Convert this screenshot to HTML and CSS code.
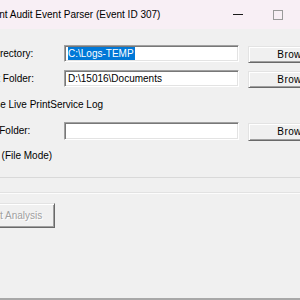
FILE: index.html
```html
<!DOCTYPE html>
<html>
<head>
<meta charset="utf-8">
<link rel="stylesheet" href="styles.css">
</head>
<body>
<div class="screen">
  <div class="window">
    <div class="titlebar">
      <div class="title">Print Audit Event Parser (Event ID 307)</div>
      <span class="min"></span>
      <span class="max"></span>
    </div>
    <div class="client">
      <div class="row r1">
        <span class="lab">Log Directory:</span>
        <div class="input"><span class="sel">C:\Logs-TEMP</span></div>
        <button class="btn">Browse...</button>
      </div>
      <div class="row r2">
        <span class="lab">Output Folder:</span>
        <div class="input">D:\15016\Documents</div>
        <button class="btn">Browse...</button>
      </div>
      <div class="check r3">
        <span class="box"></span>
        <span class="ctext">Use Live PrintService Log</span>
      </div>
      <div class="row r4">
        <span class="lab">Watch Folder:</span>
        <div class="input"></div>
        <button class="btn">Browse...</button>
      </div>
      <div class="mode">Mode: (File Mode)</div>
      <div class="sep1"></div>
      <div class="sep2"></div>
      <button class="start" disabled>Start Analysis</button>
    </div>
  </div>
  <div class="bottomline"></div>
</div>
</body>
</html>
```
FILE: styles.css
```css
html, body {
  margin: 0;
  padding: 0;
  background: #f0f0f0;
}
body {
  font-family: "Liberation Sans", Arial, sans-serif;
  font-size: 10px;
  color: #000;
}
.screen {
  width: 300px;
  height: 300px;
  overflow: hidden;
  display: flex;
  flex-direction: column;
  background: #f0f0f0;
}
.window {
  flex: 1;
  margin-left: -29px;
  width: 420px;
  display: flex;
  flex-direction: column;
}
.titlebar {
  height: 29px;
  flex: none;
  background: #f8eff5;
  display: flex;
  align-items: center;
}
.title {
  width: 262px;
  box-sizing: border-box;
  padding-left: 16px;
  font-size: 10px;
  white-space: nowrap;
  line-height: 12px;
}
.min {
  width: 10px;
  height: 1px;
  background: #1a1a1a;
}
.max {
  width: 8px;
  height: 8px;
  margin-left: 30px;
  border: 1px solid #9a9a9a;
}
.client {
  flex: 1;
  display: flex;
  flex-direction: column;
}
.row {
  display: flex;
  align-items: flex-start;
  height: 18px;
  flex: none;
}
.lab {
  width: 93px;
  flex: none;
  white-space: nowrap;
  line-height: 17px;
}
.r2 .lab { text-indent: -1px; }
.r4 .lab { text-indent: -2.5px; }
.input {
  width: 175px;
  height: 17px;
  box-sizing: border-box;
  flex: none;
  background: #fff;
  border-top: 1px solid #a0a0a0;
  border-left: 1px solid #a0a0a0;
  border-right: 1px solid #fff;
  border-bottom: 1px solid #fff;
  box-shadow: inset 1px 1px 0 #787878, inset -1px -1px 0 #e3e3e3;
  padding: 1px 0 0 3px;
  line-height: 13px;
  white-space: nowrap;
  overflow: hidden;
}
.sel {
  background: #0078d7;
  color: #fff;
  display: inline-block;
  padding: 0 1px 0 0;
}
.btn {
  margin-left: 9px;
  margin-top: 1px;
  width: 100px;
  height: 17px;
  flex: none;
  box-sizing: border-box;
  padding: 0 0 0 4px;
  font: inherit;
  letter-spacing: 0.4px;
  color: #000;
  background: #f0f0f0;
  border-top: 1px solid #e3e3e3;
  border-left: 1px solid #e3e3e3;
  border-right: 1px solid #696969;
  border-bottom: 1px solid #696969;
  box-shadow: inset 1px 1px 0 #fff, inset -1px -1px 0 #a0a0a0;
  line-height: 14px;
  text-align: center;
}
.r1 { margin-top: 16px; }
.r2 { margin-top: 7px; }
.check {
  display: flex;
  align-items: center;
  height: 16px;
  margin-top: 8px;
  flex: none;
}
.box {
  width: 11px;
  height: 11px;
  box-sizing: border-box;
  border: 1px solid #333;
  background: #fff;
  flex: none;
}
.ctext {
  margin-left: 6px;
  white-space: nowrap;
}
.r4 { margin-top: 10px; height: 19px; }
.r4 .input { height: 18px; }
.r4 .btn { height: 18px; }
.mode {
  margin-top: 7px;
  height: 16px;
  line-height: 16px;
  white-space: nowrap;
  flex: none;
}
.sep1 {
  margin-top: 13px;
  height: 1px;
  background: #d9d9d9;
  flex: none;
}
.sep2 {
  margin-top: 14px;
  height: 1px;
  border-bottom: 1px solid #fcfcfc;
  background: #e2e2e2;
  flex: none;
}
.start {
  margin-top: 9px;
  margin-left: -2px;
  width: 86px;
  height: 25px;
  box-sizing: border-box;
  flex: none;
  padding: 0;
  font: inherit;
  color: #a0a0a0;
  text-shadow: 1px 1px 0 #fff;
  background: #f0f0f0;
  border-top: 1px solid #e3e3e3;
  border-left: 1px solid #e3e3e3;
  border-right: 1px solid #696969;
  border-bottom: 1px solid #696969;
  box-shadow: inset 1px 1px 0 #fff, inset -1px -1px 0 #a0a0a0;
  text-align: center;
}
.bottomline {
  height: 2px;
  flex: none;
  background: #a8a8a8;
}
```
